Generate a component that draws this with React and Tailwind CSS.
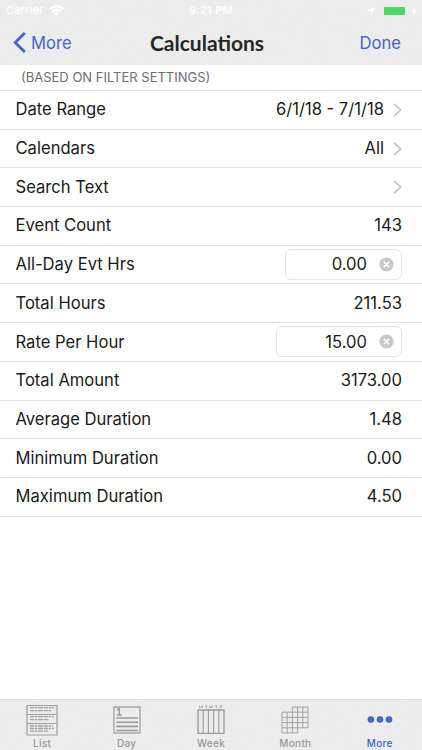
import React, { useState } from "react";

const rows = [
  { label: "Date Range", value: "6/1/18 - 7/1/18", type: "link" },
  { label: "Calendars", value: "All", type: "link" },
  { label: "Search Text", value: "", type: "link" },
  { label: "Event Count", value: "143" },
  { label: "All-Day Evt Hrs", value: "0.00", type: "input", box: "w-[117px]" },
  { label: "Total Hours", value: "211.53" },
  { label: "Rate Per Hour", value: "15.00", type: "input", box: "w-[126px]" },
  { label: "Total Amount", value: "3173.00" },
  { label: "Average Duration", value: "1.48" },
  { label: "Minimum Duration", value: "0.00" },
  { label: "Maximum Duration", value: "4.50" },
];

// Paper grain behind the bars
const Grain = ({ id }) => (
  <svg className="absolute inset-0 w-full h-full opacity-[0.07] pointer-events-none" aria-hidden="true">
    <filter id={id}>
      <feTurbulence type="fractalNoise" baseFrequency="0.4" numOctaves="2" />
      <feColorMatrix type="saturate" values="0" />
    </filter>
    <rect width="100%" height="100%" filter={`url(#${id})`} />
  </svg>
);

const Chevron = () => (
  <svg className="w-[9px] h-[14px] ml-[9px]" viewBox="0 0 9 14" fill="none">
    <path d="M1 0.8L7.6 7L1 13.2" stroke="#c4c4c8" strokeWidth="1.6" />
  </svg>
);

const ClearButton = ({ onClick }) => (
  <button onClick={onClick} aria-label="Clear">
    <svg className="w-[15px] h-[15px]" viewBox="0 0 15 15">
      <circle cx="7.5" cy="7.5" r="7.1" fill="#c9c9cb" />
      <path d="M4.9 4.9L10.1 10.1M10.1 4.9L4.9 10.1" stroke="#fff" strokeWidth="1.5" />
    </svg>
  </button>
);

const Row = ({ row }) => {
  const [value, setValue] = useState(row.value);

  return (
    <div className="h-[38.7px] pl-[15.5px] pr-5 flex items-center justify-between border-b border-[#e3e3e5] text-[16.6px] text-[#1a1a1a]">
      <span>{row.label}</span>
      {row.type === "link" && (
        <span className="flex items-center">
          {value}
          <Chevron />
        </span>
      )}
      {row.type === "input" && (
        <span className={`${row.box} h-[31px] flex items-center justify-end gap-3 pr-[7px] border border-[#e6e6e6] rounded-[6px]`}>
          {value}
          <ClearButton onClick={() => setValue("")} />
        </span>
      )}
      {!row.type && <span>{value}</span>}
    </div>
  );
};

const ListIcon = () => (
  <svg className="w-8 h-8" viewBox="0 0 32 32" fill="none" stroke="#a0a0a0">
    <path d="M1 1.5H31V31H1ZM1 10.5H31M1 19.5H31" strokeWidth="1.2" />
    <path d="M4 3.7H28M4 6.7H26M4 12.7H28M4 15.7H23M4 22H27M4 24.5H28M4 27.2H22" strokeWidth="1.3" strokeDasharray="4 0.8 2.5 0.8 5 0.8" />
  </svg>
);

const DayIcon = () => (
  <svg className="w-7 h-7" viewBox="0 0 28 28" fill="none" stroke="#999">
    <rect x="1" y="1" width="26" height="26" strokeWidth="1.2" />
    <path d="M4 3.6L6.3 2.6V8.6M3.8 9H8.6" strokeWidth="1.5" />
    <path d="M3.5 12H25M3.5 16.2H25M3.5 20.4H25M3.5 24.5H25" strokeWidth="1.6" />
  </svg>
);

const WeekIcon = () => (
  <svg className="w-7 h-[29px]" viewBox="0 0 28 29" fill="none" stroke="#999">
    <path d="M1 5H27V28.3H1Z" strokeWidth="1.3" />
    <path d="M6.2 5V28M11.4 5V28M16.6 5V28M21.8 5V28" strokeWidth="1.1" />
    <path d="M2.5 3V0.8L4 2.3L5.5 0.8V3M8 0.9H10.6M9.3 0.9V3M12.5 0.7L13.2 3L14 1.3L14.8 3L15.5 0.7M18 0.9H20.6M19.3 0.9V3M25.4 0.9H23.4V3M23.4 2H25" strokeWidth="0.7" />
  </svg>
);

const MonthIcon = () => (
  <svg className="w-7 h-7" viewBox="0 0 28 28" fill="none" stroke="#a3a3a3" strokeWidth="1">
    <path d="M11.4 1H27M1 6.2H27M1 11.4H27M1 16.6H27M1 21.8H27M1 27H16.6" />
    <path d="M1 6.2V27M6.2 6.2V27M11.4 1V27M16.6 1V27M21.8 1V21.8M27 1V21.8" />
  </svg>
);

const MoreIcon = () => (
  <svg className="w-[26px] h-[7px]" viewBox="0 0 26 7" fill="#4167cb">
    <circle cx="3.9" cy="3.5" r="3.3" />
    <circle cx="13" cy="3.5" r="3.3" />
    <circle cx="22" cy="3.5" r="3.3" />
  </svg>
);

const tabs = [
  { label: "List", icon: <ListIcon /> },
  { label: "Day", icon: <DayIcon /> },
  { label: "Week", icon: <WeekIcon /> },
  { label: "Month", icon: <MonthIcon /> },
  { label: "More", icon: <MoreIcon />, active: true },
];

const App = () => {
  return (
    <div className="w-[422px] h-[750px] flex flex-col bg-white overflow-hidden font-[Inter,sans-serif]">
      {/* HEADER */}
      <header className="relative h-[65px] shrink-0 bg-[#eeeeee]">
        <Grain id="grain-top" />
        <div className="relative h-[21px] px-[6px] grid grid-cols-[1fr_auto_1fr] items-center text-[11px] text-white">
          <div className="flex items-center gap-[6px]">
            <span className="tracking-[0.2px]">Carrier</span>
            <svg className="w-[15px] h-[11px]" viewBox="0 0 15 11" fill="none" stroke="#fff" strokeWidth="2">
              <path d="M0.8 4.2C4.5 0.4 10.5 0.4 14.2 4.2M3.3 6.7C5.7 4.4 9.3 4.4 11.7 6.7" />
              <path d="M7.5 10.8L5 8.3C6.4 7 8.6 7 10 8.3Z" fill="#fff" stroke="none" />
            </svg>
          </div>
          <span className="font-medium tracking-[0.3px]">9:21 PM</span>
          <div className="flex items-center justify-end">
            <svg className="w-2 h-2 mr-[9px]" viewBox="0 0 8 8" fill="#fff">
              <path d="M8 0L4.6 8L4 4L0 3.4Z" />
            </svg>
            <div className="w-[21px] h-2 rounded-[1px] bg-[#4cd764]" />
            <div className="w-[1.5px] h-[3px] ml-[2px] bg-white rounded-r" />
            <svg className="w-[6px] h-2 ml-[3px] -mr-px" viewBox="0 0 6 8" fill="#fff">
              <path d="M4 0L0 4.6H2.7L2 8L6 3.4H3.3Z" />
            </svg>
          </div>
        </div>
        <div className="relative h-[44px] pl-[13px] pr-[21px] grid grid-cols-[1fr_auto_1fr] items-center text-[16.6px] text-[#4167cb]">
          <button className="flex items-center gap-[5px]">
            <svg className="w-[13px] h-[21px]" viewBox="0 0 13 21" fill="none" stroke="currentColor" strokeWidth="2.8">
              <path d="M11.8 1L2.2 10.5L11.8 20" />
            </svg>
            More
          </button>
          <h1 className="font-[Lato,sans-serif] font-bold text-[21px] text-[#262626]">Calculations</h1>
          <button className="justify-self-end">Done</button>
        </div>
      </header>

      {/* SETTINGS ROWS */}
      <main className="flex-1">
        <h2 className="h-[26px] pl-[21px] flex items-center border-b border-[#e3e3e5] text-[13px] text-[#6d6d72]">
          (BASED ON FILTER SETTINGS)
        </h2>
        {rows.map((row) => (
          <Row key={row.label} row={row} />
        ))}
      </main>

      {/* TAB BAR */}
      <nav className="relative h-[51px] shrink-0 bg-[#eeeeee] border-t border-[#dedede]">
        <Grain id="grain-bottom" />
        <div className="relative h-full grid grid-cols-5">
          {tabs.map((tab) => (
            <button
              key={tab.label}
              className={`flex flex-col items-center text-[10px] font-medium tracking-[0.3px] ${tab.active ? "text-[#4167cb]" : "text-[#989898]"}`}
            >
              <span className="h-[37px] pt-[2px] flex items-center">{tab.icon}</span>
              <span className="leading-3">{tab.label}</span>
            </button>
          ))}
        </div>
      </nav>
    </div>
  );
};

export default App;
